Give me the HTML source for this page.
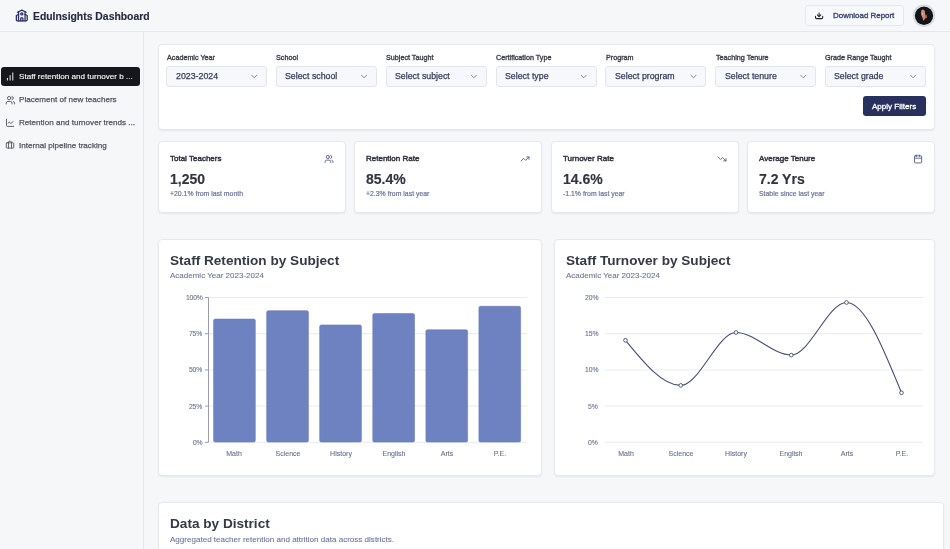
<!DOCTYPE html>
<html><head><meta charset="utf-8"><style>
html,body{margin:0;padding:0;width:950px;height:549px;overflow:hidden;background:#f6f7f9;font-family:"Liberation Sans", sans-serif;}
body{position:relative;}
div{will-change:transform;}
</style></head><body>
<div style="position:absolute;left:0px;top:31px;width:950px;height:1px;background:#e4e8ec"></div>
<div style="position:absolute;left:143px;top:32px;width:1px;height:517px;background:#e4e8ec"></div>
<div style="position:absolute;left:32.8px;top:12.00px;font-size:10.4px;line-height:10.4px;font-weight:700;color:#272b40;white-space:nowrap;letter-spacing:0px;-webkit-text-stroke:0.15px #272b40;">EduInsights Dashboard</div>
<div style="position:absolute;left:805px;top:5px;width:99px;height:21px;background:#f8f9fb;border:1px solid #e4e8ec;border-radius:3px;box-sizing:border-box"></div>
<div style="position:absolute;left:832.7px;top:12.00px;font-size:7.95px;line-height:7.95px;font-weight:400;color:#3b4370;white-space:nowrap;letter-spacing:0px;-webkit-text-stroke:0.35px #3b4370;">Download Report</div>
<div style="position:absolute;left:1px;top:67px;width:139px;height:19.3px;background:#16171d;border-radius:3px"></div>
<div style="position:absolute;left:18.6px;top:73.00px;font-size:8.1px;line-height:8.1px;font-weight:400;color:#f4f4f6;white-space:nowrap;letter-spacing:0px;-webkit-text-stroke:0.15px #f4f4f6;">Staff retention and turnover b ...</div>
<div style="position:absolute;left:18.8px;top:96.00px;font-size:8.1px;line-height:8.1px;font-weight:400;color:#50555f;white-space:nowrap;letter-spacing:0px;-webkit-text-stroke:0.25px #50555f;">Placement of new teachers</div>
<div style="position:absolute;left:18.8px;top:119.00px;font-size:8.1px;line-height:8.1px;font-weight:400;color:#50555f;white-space:nowrap;letter-spacing:0px;-webkit-text-stroke:0.25px #50555f;">Retention and turnover trends ...</div>
<div style="position:absolute;left:18.8px;top:142.00px;font-size:8.1px;line-height:8.1px;font-weight:400;color:#50555f;white-space:nowrap;letter-spacing:0px;-webkit-text-stroke:0.25px #50555f;">Internal pipeline tracking</div>
<div style="position:absolute;left:158px;top:44px;width:777px;height:86px;background:#fff;border:1px solid #e5e8ee;border-radius:4px;box-sizing:border-box;box-shadow:0 1px 1.5px rgba(20,30,60,0.07)"></div>
<div style="position:absolute;left:166.6px;top:54.00px;font-size:7.2px;line-height:7.2px;font-weight:400;color:#3a3e49;white-space:nowrap;letter-spacing:0px;-webkit-text-stroke:0.35px #3a3e49;">Academic Year</div>
<div style="position:absolute;left:166px;top:66px;width:101px;height:21px;background:#f7f8fb;border:1px solid #e1e5ec;border-radius:3px;box-sizing:border-box"></div>
<div style="position:absolute;left:175.5px;top:72.00px;font-size:8.8px;line-height:8.8px;font-weight:400;color:#363c5a;white-space:nowrap;letter-spacing:0px;-webkit-text-stroke:0.25px #363c5a;">2023-2024</div>
<div style="position:absolute;left:276.40000000000003px;top:54.00px;font-size:7.2px;line-height:7.2px;font-weight:400;color:#3a3e49;white-space:nowrap;letter-spacing:0px;-webkit-text-stroke:0.35px #3a3e49;">School</div>
<div style="position:absolute;left:276px;top:66px;width:101px;height:21px;background:#f7f8fb;border:1px solid #e1e5ec;border-radius:3px;box-sizing:border-box"></div>
<div style="position:absolute;left:285.3px;top:72.00px;font-size:8.8px;line-height:8.8px;font-weight:400;color:#363c5a;white-space:nowrap;letter-spacing:0px;-webkit-text-stroke:0.25px #363c5a;">Select school</div>
<div style="position:absolute;left:386.20000000000005px;top:54.00px;font-size:7.2px;line-height:7.2px;font-weight:400;color:#3a3e49;white-space:nowrap;letter-spacing:0px;-webkit-text-stroke:0.35px #3a3e49;">Subject Taught</div>
<div style="position:absolute;left:386px;top:66px;width:101px;height:21px;background:#f7f8fb;border:1px solid #e1e5ec;border-radius:3px;box-sizing:border-box"></div>
<div style="position:absolute;left:395.1px;top:72.00px;font-size:8.8px;line-height:8.8px;font-weight:400;color:#363c5a;white-space:nowrap;letter-spacing:0px;-webkit-text-stroke:0.25px #363c5a;">Select subject</div>
<div style="position:absolute;left:496.0px;top:54.00px;font-size:7.2px;line-height:7.2px;font-weight:400;color:#3a3e49;white-space:nowrap;letter-spacing:0px;-webkit-text-stroke:0.35px #3a3e49;">Certification Type</div>
<div style="position:absolute;left:496px;top:66px;width:101px;height:21px;background:#f7f8fb;border:1px solid #e1e5ec;border-radius:3px;box-sizing:border-box"></div>
<div style="position:absolute;left:504.9px;top:72.00px;font-size:8.8px;line-height:8.8px;font-weight:400;color:#363c5a;white-space:nowrap;letter-spacing:0px;-webkit-text-stroke:0.25px #363c5a;">Select type</div>
<div style="position:absolute;left:605.8000000000001px;top:54.00px;font-size:7.2px;line-height:7.2px;font-weight:400;color:#3a3e49;white-space:nowrap;letter-spacing:0px;-webkit-text-stroke:0.35px #3a3e49;">Program</div>
<div style="position:absolute;left:605px;top:66px;width:101px;height:21px;background:#f7f8fb;border:1px solid #e1e5ec;border-radius:3px;box-sizing:border-box"></div>
<div style="position:absolute;left:614.7px;top:72.00px;font-size:8.8px;line-height:8.8px;font-weight:400;color:#363c5a;white-space:nowrap;letter-spacing:0px;-webkit-text-stroke:0.25px #363c5a;">Select program</div>
<div style="position:absolute;left:715.6px;top:54.00px;font-size:7.2px;line-height:7.2px;font-weight:400;color:#3a3e49;white-space:nowrap;letter-spacing:0px;-webkit-text-stroke:0.35px #3a3e49;">Teaching Tenure</div>
<div style="position:absolute;left:715px;top:66px;width:101px;height:21px;background:#f7f8fb;border:1px solid #e1e5ec;border-radius:3px;box-sizing:border-box"></div>
<div style="position:absolute;left:724.5px;top:72.00px;font-size:8.8px;line-height:8.8px;font-weight:400;color:#363c5a;white-space:nowrap;letter-spacing:0px;-webkit-text-stroke:0.25px #363c5a;">Select tenure</div>
<div style="position:absolute;left:825.4px;top:54.00px;font-size:7.2px;line-height:7.2px;font-weight:400;color:#3a3e49;white-space:nowrap;letter-spacing:0px;-webkit-text-stroke:0.35px #3a3e49;">Grade Range Taught</div>
<div style="position:absolute;left:825px;top:66px;width:101px;height:21px;background:#f7f8fb;border:1px solid #e1e5ec;border-radius:3px;box-sizing:border-box"></div>
<div style="position:absolute;left:834.3px;top:72.00px;font-size:8.8px;line-height:8.8px;font-weight:400;color:#363c5a;white-space:nowrap;letter-spacing:0px;-webkit-text-stroke:0.25px #363c5a;">Select grade</div>
<div style="position:absolute;left:863px;top:96px;width:63px;height:20px;background:#28305e;border-radius:3px"></div>
<div style="position:absolute;left:872.4px;top:103.00px;font-size:8.05px;line-height:8.05px;font-weight:400;color:#ffffff;white-space:nowrap;letter-spacing:0px;-webkit-text-stroke:0.3px #ffffff;">Apply Filters</div>
<div style="position:absolute;left:158px;top:141px;width:188px;height:72px;background:#fff;border:1px solid #e5e8ee;border-radius:4px;box-sizing:border-box;box-shadow:0 1px 1.5px rgba(20,30,60,0.07)"></div>
<div style="position:absolute;left:170px;top:155.00px;font-size:8.0px;line-height:8.0px;font-weight:400;color:#30343f;white-space:nowrap;letter-spacing:0px;-webkit-text-stroke:0.45px #30343f;">Total Teachers</div>
<div style="position:absolute;left:170px;top:172.00px;font-size:14px;line-height:14px;font-weight:700;color:#32353e;white-space:nowrap;letter-spacing:0px;-webkit-text-stroke:0.15px #32353e;">1,250</div>
<div style="position:absolute;left:170px;top:191.00px;font-size:6.9px;line-height:6.9px;font-weight:400;color:#6b7395;white-space:nowrap;letter-spacing:0px;-webkit-text-stroke:0.2px #6b7395;">+20.1% from last month</div>
<div style="position:absolute;left:354px;top:141px;width:188px;height:72px;background:#fff;border:1px solid #e5e8ee;border-radius:4px;box-sizing:border-box;box-shadow:0 1px 1.5px rgba(20,30,60,0.07)"></div>
<div style="position:absolute;left:366px;top:155.00px;font-size:8.0px;line-height:8.0px;font-weight:400;color:#30343f;white-space:nowrap;letter-spacing:0px;-webkit-text-stroke:0.45px #30343f;">Retention Rate</div>
<div style="position:absolute;left:366px;top:172.00px;font-size:14px;line-height:14px;font-weight:700;color:#32353e;white-space:nowrap;letter-spacing:0px;-webkit-text-stroke:0.15px #32353e;">85.4%</div>
<div style="position:absolute;left:366px;top:191.00px;font-size:6.9px;line-height:6.9px;font-weight:400;color:#6b7395;white-space:nowrap;letter-spacing:0px;-webkit-text-stroke:0.2px #6b7395;">+2.3% from last year</div>
<div style="position:absolute;left:551px;top:141px;width:188px;height:72px;background:#fff;border:1px solid #e5e8ee;border-radius:4px;box-sizing:border-box;box-shadow:0 1px 1.5px rgba(20,30,60,0.07)"></div>
<div style="position:absolute;left:563px;top:155.00px;font-size:8.0px;line-height:8.0px;font-weight:400;color:#30343f;white-space:nowrap;letter-spacing:0px;-webkit-text-stroke:0.45px #30343f;">Turnover Rate</div>
<div style="position:absolute;left:563px;top:172.00px;font-size:14px;line-height:14px;font-weight:700;color:#32353e;white-space:nowrap;letter-spacing:0px;-webkit-text-stroke:0.15px #32353e;">14.6%</div>
<div style="position:absolute;left:563px;top:191.00px;font-size:6.9px;line-height:6.9px;font-weight:400;color:#6b7395;white-space:nowrap;letter-spacing:0px;-webkit-text-stroke:0.2px #6b7395;">-1.1% from last year</div>
<div style="position:absolute;left:747px;top:141px;width:188px;height:72px;background:#fff;border:1px solid #e5e8ee;border-radius:4px;box-sizing:border-box;box-shadow:0 1px 1.5px rgba(20,30,60,0.07)"></div>
<div style="position:absolute;left:759px;top:155.00px;font-size:8.0px;line-height:8.0px;font-weight:400;color:#30343f;white-space:nowrap;letter-spacing:0px;-webkit-text-stroke:0.45px #30343f;">Average Tenure</div>
<div style="position:absolute;left:759px;top:172.00px;font-size:14px;line-height:14px;font-weight:700;color:#32353e;white-space:nowrap;letter-spacing:0px;-webkit-text-stroke:0.15px #32353e;">7.2 Yrs</div>
<div style="position:absolute;left:759px;top:191.00px;font-size:6.9px;line-height:6.9px;font-weight:400;color:#6b7395;white-space:nowrap;letter-spacing:0px;-webkit-text-stroke:0.2px #6b7395;">Stable since last year</div>
<div style="position:absolute;left:158px;top:239px;width:384px;height:237px;background:#fff;border:1px solid #e5e8ee;border-radius:4px;box-sizing:border-box;box-shadow:0 1px 1.5px rgba(20,30,60,0.07)"></div>
<div style="position:absolute;left:170.2px;top:254.00px;font-size:13.6px;line-height:13.6px;font-weight:700;color:#363a45;white-space:nowrap;letter-spacing:0px;-webkit-text-stroke:0.001px #363a45;">Staff Retention by Subject</div>
<div style="position:absolute;left:170.2px;top:272.00px;font-size:8px;line-height:8px;font-weight:400;color:#6b7395;white-space:nowrap;letter-spacing:0px;-webkit-text-stroke:0.08px #6b7395;">Academic Year 2023-2024</div>
<div style="position:absolute;left:554px;top:239px;width:381px;height:237px;background:#fff;border:1px solid #e5e8ee;border-radius:4px;box-sizing:border-box;box-shadow:0 1px 1.5px rgba(20,30,60,0.07)"></div>
<div style="position:absolute;left:566.2px;top:254.00px;font-size:13.6px;line-height:13.6px;font-weight:700;color:#363a45;white-space:nowrap;letter-spacing:0px;-webkit-text-stroke:0.001px #363a45;">Staff Turnover by Subject</div>
<div style="position:absolute;left:566.2px;top:272.00px;font-size:8px;line-height:8px;font-weight:400;color:#6b7395;white-space:nowrap;letter-spacing:0px;-webkit-text-stroke:0.08px #6b7395;">Academic Year 2023-2024</div>
<div style="position:absolute;right:747.8px;text-align:right;top:295.00px;font-size:6.8px;line-height:6.8px;font-weight:400;color:#66718f;white-space:nowrap;letter-spacing:-0.2px;-webkit-text-stroke:0.1px #66718f;">100%</div>
<div style="position:absolute;right:747.8px;text-align:right;top:331.00px;font-size:6.8px;line-height:6.8px;font-weight:400;color:#66718f;white-space:nowrap;letter-spacing:-0.2px;-webkit-text-stroke:0.1px #66718f;">75%</div>
<div style="position:absolute;right:747.8px;text-align:right;top:367.00px;font-size:6.8px;line-height:6.8px;font-weight:400;color:#66718f;white-space:nowrap;letter-spacing:-0.2px;-webkit-text-stroke:0.1px #66718f;">50%</div>
<div style="position:absolute;right:747.8px;text-align:right;top:404.00px;font-size:6.8px;line-height:6.8px;font-weight:400;color:#66718f;white-space:nowrap;letter-spacing:-0.2px;-webkit-text-stroke:0.1px #66718f;">25%</div>
<div style="position:absolute;right:747.8px;text-align:right;top:440.00px;font-size:6.8px;line-height:6.8px;font-weight:400;color:#66718f;white-space:nowrap;letter-spacing:-0.2px;-webkit-text-stroke:0.1px #66718f;">0%</div>
<div style="position:absolute;right:351.79999999999995px;text-align:right;top:295.00px;font-size:6.8px;line-height:6.8px;font-weight:400;color:#66718f;white-space:nowrap;letter-spacing:-0.05px;-webkit-text-stroke:0.1px #66718f;">20%</div>
<div style="position:absolute;right:351.79999999999995px;text-align:right;top:331.00px;font-size:6.8px;line-height:6.8px;font-weight:400;color:#66718f;white-space:nowrap;letter-spacing:-0.05px;-webkit-text-stroke:0.1px #66718f;">15%</div>
<div style="position:absolute;right:351.79999999999995px;text-align:right;top:367.00px;font-size:6.8px;line-height:6.8px;font-weight:400;color:#66718f;white-space:nowrap;letter-spacing:-0.05px;-webkit-text-stroke:0.1px #66718f;">10%</div>
<div style="position:absolute;right:351.79999999999995px;text-align:right;top:404.00px;font-size:6.8px;line-height:6.8px;font-weight:400;color:#66718f;white-space:nowrap;letter-spacing:-0.05px;-webkit-text-stroke:0.1px #66718f;">5%</div>
<div style="position:absolute;right:351.79999999999995px;text-align:right;top:440.00px;font-size:6.8px;line-height:6.8px;font-weight:400;color:#66718f;white-space:nowrap;letter-spacing:-0.05px;-webkit-text-stroke:0.1px #66718f;">0%</div>
<div style="position:absolute;left:34.44999999999999px;width:400px;text-align:center;top:450.00px;font-size:7px;line-height:7px;font-weight:400;color:#66718f;white-space:nowrap;letter-spacing:0px;-webkit-text-stroke:0.1px #66718f;">Math</div>
<div style="position:absolute;left:87.55000000000001px;width:400px;text-align:center;top:450.00px;font-size:7px;line-height:7px;font-weight:400;color:#66718f;white-space:nowrap;letter-spacing:0px;-webkit-text-stroke:0.1px #66718f;">Science</div>
<div style="position:absolute;left:140.55px;width:400px;text-align:center;top:450.00px;font-size:7px;line-height:7px;font-weight:400;color:#66718f;white-space:nowrap;letter-spacing:0px;-webkit-text-stroke:0.1px #66718f;">History</div>
<div style="position:absolute;left:193.65000000000003px;width:400px;text-align:center;top:450.00px;font-size:7px;line-height:7px;font-weight:400;color:#66718f;white-space:nowrap;letter-spacing:0px;-webkit-text-stroke:0.1px #66718f;">English</div>
<div style="position:absolute;left:246.75px;width:400px;text-align:center;top:450.00px;font-size:7px;line-height:7px;font-weight:400;color:#66718f;white-space:nowrap;letter-spacing:0px;-webkit-text-stroke:0.1px #66718f;">Arts</div>
<div style="position:absolute;left:299.75px;width:400px;text-align:center;top:450.00px;font-size:7px;line-height:7px;font-weight:400;color:#66718f;white-space:nowrap;letter-spacing:0px;-webkit-text-stroke:0.1px #66718f;">P.E.</div>
<div style="position:absolute;left:425.5px;width:400px;text-align:center;top:450.00px;font-size:7px;line-height:7px;font-weight:400;color:#66718f;white-space:nowrap;letter-spacing:0px;-webkit-text-stroke:0.1px #66718f;">Math</div>
<div style="position:absolute;left:480.75px;width:400px;text-align:center;top:450.00px;font-size:7px;line-height:7px;font-weight:400;color:#66718f;white-space:nowrap;letter-spacing:0px;-webkit-text-stroke:0.1px #66718f;">Science</div>
<div style="position:absolute;left:536px;width:400px;text-align:center;top:450.00px;font-size:7px;line-height:7px;font-weight:400;color:#66718f;white-space:nowrap;letter-spacing:0px;-webkit-text-stroke:0.1px #66718f;">History</div>
<div style="position:absolute;left:591.25px;width:400px;text-align:center;top:450.00px;font-size:7px;line-height:7px;font-weight:400;color:#66718f;white-space:nowrap;letter-spacing:0px;-webkit-text-stroke:0.1px #66718f;">English</div>
<div style="position:absolute;left:646.5px;width:400px;text-align:center;top:450.00px;font-size:7px;line-height:7px;font-weight:400;color:#66718f;white-space:nowrap;letter-spacing:0px;-webkit-text-stroke:0.1px #66718f;">Arts</div>
<div style="position:absolute;left:701.5px;width:400px;text-align:center;top:450.00px;font-size:7px;line-height:7px;font-weight:400;color:#66718f;white-space:nowrap;letter-spacing:0px;-webkit-text-stroke:0.1px #66718f;">P.E.</div>
<div style="position:absolute;left:158px;top:502px;width:786px;height:60px;background:#fff;border:1px solid #e5e8ee;border-radius:4px;box-sizing:border-box;box-shadow:0 1px 1.5px rgba(20,30,60,0.07)"></div>
<div style="position:absolute;left:170.4px;top:517.00px;font-size:13.6px;line-height:13.6px;font-weight:700;color:#363a45;white-space:nowrap;letter-spacing:0px;-webkit-text-stroke:0.001px #363a45;">Data by District</div>
<div style="position:absolute;left:170.4px;top:536.00px;font-size:8.05px;line-height:8.05px;font-weight:400;color:#6b7395;white-space:nowrap;letter-spacing:0px;-webkit-text-stroke:0.08px #6b7395;">Aggregated teacher retention and attrition data across districts.</div>
<svg style="position:absolute;left:0;top:0;pointer-events:none" width="950" height="549" viewBox="0 0 950 549"><line x1="208.5" x2="527" y1="297.5" y2="297.5" stroke="#e8ebf1" stroke-width="1"/><line x1="205" x2="208.5" y1="297.5" y2="297.5" stroke="#9a9ca6" stroke-width="1"/><line x1="208.5" x2="527" y1="333.7" y2="333.7" stroke="#e8ebf1" stroke-width="1"/><line x1="205" x2="208.5" y1="333.7" y2="333.7" stroke="#9a9ca6" stroke-width="1"/><line x1="208.5" x2="527" y1="369.9" y2="369.9" stroke="#e8ebf1" stroke-width="1"/><line x1="205" x2="208.5" y1="369.9" y2="369.9" stroke="#9a9ca6" stroke-width="1"/><line x1="208.5" x2="527" y1="406.1" y2="406.1" stroke="#e8ebf1" stroke-width="1"/><line x1="205" x2="208.5" y1="406.1" y2="406.1" stroke="#9a9ca6" stroke-width="1"/><line x1="208.5" x2="527" y1="442.3" y2="442.3" stroke="#e8ebf1" stroke-width="1"/><line x1="205" x2="208.5" y1="442.3" y2="442.3" stroke="#9a9ca6" stroke-width="1"/><line x1="208.5" x2="208.5" y1="297.5" y2="442.3" stroke="#9a9ca6" stroke-width="1"/><path d="M213.6,440.5 V320.6 Q213.6,319.1 215.1,319.1 H253.8 Q255.3,319.1 255.3,320.6 V440.5 Q255.3,442 253.8,442 H215.1 Q213.6,442 213.6,440.5 Z" fill="#6e82c2" stroke="#677bbc" stroke-width="0.6"/><path d="M266.7,440.5 V312.2 Q266.7,310.7 268.2,310.7 H306.9 Q308.4,310.7 308.4,312.2 V440.5 Q308.4,442 306.9,442 H268.2 Q266.7,442 266.7,440.5 Z" fill="#6e82c2" stroke="#677bbc" stroke-width="0.6"/><path d="M319.7,440.5 V326.5 Q319.7,325.0 321.2,325.0 H359.9 Q361.4,325.0 361.4,326.5 V440.5 Q361.4,442 359.9,442 H321.2 Q319.7,442 319.7,440.5 Z" fill="#6e82c2" stroke="#677bbc" stroke-width="0.6"/><path d="M372.8,440.5 V315.1 Q372.8,313.6 374.3,313.6 H413.0 Q414.5,313.6 414.5,315.1 V440.5 Q414.5,442 413.0,442 H374.3 Q372.8,442 372.8,440.5 Z" fill="#6e82c2" stroke="#677bbc" stroke-width="0.6"/><path d="M425.9,440.5 V331.3 Q425.9,329.8 427.4,329.8 H466.09999999999997 Q467.59999999999997,329.8 467.59999999999997,331.3 V440.5 Q467.59999999999997,442 466.09999999999997,442 H427.4 Q425.9,442 425.9,440.5 Z" fill="#6e82c2" stroke="#677bbc" stroke-width="0.6"/><path d="M478.9,440.5 V307.8 Q478.9,306.3 480.4,306.3 H519.1 Q520.6,306.3 520.6,307.8 V440.5 Q520.6,442 519.1,442 H480.4 Q478.9,442 478.9,440.5 Z" fill="#6e82c2" stroke="#677bbc" stroke-width="0.6"/><line x1="604.6" x2="922.8" y1="297.5" y2="297.5" stroke="#e8ebf1" stroke-width="1"/><line x1="604.6" x2="922.8" y1="333.7" y2="333.7" stroke="#e8ebf1" stroke-width="1"/><line x1="604.6" x2="922.8" y1="369.9" y2="369.9" stroke="#e8ebf1" stroke-width="1"/><line x1="604.6" x2="922.8" y1="406.1" y2="406.1" stroke="#e8ebf1" stroke-width="1"/><line x1="604.6" x2="922.8" y1="442.3" y2="442.3" stroke="#e8ebf1" stroke-width="1"/><path d="M625.50,340.30C643.92,362.85,662.33,385.40,680.75,385.40C699.17,385.40,717.58,332.50,736.00,332.50C754.42,332.50,772.83,355.10,791.25,355.10C809.67,355.10,828.08,302.50,846.50,302.50C864.83,302.50,883.17,347.65,901.50,392.80" fill="none" stroke="#434d73" stroke-width="1.1"/><circle cx="625.5" cy="340.3" r="1.85" fill="#fff" stroke="#434d73" stroke-width="0.9"/><circle cx="680.75" cy="385.4" r="1.85" fill="#fff" stroke="#434d73" stroke-width="0.9"/><circle cx="736" cy="332.5" r="1.85" fill="#fff" stroke="#434d73" stroke-width="0.9"/><circle cx="791.25" cy="355.1" r="1.85" fill="#fff" stroke="#434d73" stroke-width="0.9"/><circle cx="846.5" cy="302.5" r="1.85" fill="#fff" stroke="#434d73" stroke-width="0.9"/><circle cx="901.5" cy="392.8" r="1.85" fill="#fff" stroke="#434d73" stroke-width="0.9"/><g transform="translate(15.3,9) scale(0.5416666666666666)" fill="none" stroke="#2b3566" stroke-width="2.4" stroke-linecap="round" stroke-linejoin="round"><path d="M14 22v-4a2 2 0 1 0-4 0v4"/><path d="m18 10 4 2v8a2 2 0 0 1-2 2H4a2 2 0 0 1-2-2v-8l4-2"/><path d="M18 5v17"/><path d="m4 6 8-4 8 4"/><path d="M6 5v17"/><circle cx="12" cy="9" r="2"/></g><g fill="none" stroke="#1f2330" stroke-width="1.05" stroke-linecap="round" stroke-linejoin="round"><path d="M815.5,16.2 V17.6 Q815.5,18.6 816.5,18.6 H821.7 Q822.7,18.6 822.7,17.6 V16.2"/><path d="M819.1,12.9 V16.4"/><path d="M817.4,14.9 L819.1,16.6 L820.8,14.9"/></g><circle cx="924" cy="15.7" r="10.4" fill="none" stroke="#d6d9e3" stroke-width="1.6"/><circle cx="924" cy="15.7" r="9.2" fill="#141318"/><path d="M921.5 10 Q923.5 8.6 924.8 11 L925.4 16.5 Q925 19.5 923.4 21 L922.4 17.5 Q920.8 15.5 921 12.5 Z" fill="#c98f70"/><path d="M925.3 14.5 Q927.4 14.6 927 17.8 L924.6 19 Z" fill="#a8684c"/><circle cx="922.6" cy="13.8" r="0.6" fill="#e8d0c0"/><g transform="translate(4.7,71.1) scale(0.45)" fill="none" stroke="#ffffff" stroke-width="2.1" stroke-linecap="round" stroke-linejoin="round"><path d="M12 20V10"/><path d="M18 20V4"/><path d="M6 20v-4"/></g><g transform="translate(5.4,95.2) scale(0.4166666666666667)" fill="none" stroke="#50555f" stroke-width="2.2" stroke-linecap="round" stroke-linejoin="round"><path d="M16 21v-2a4 4 0 0 0-4-4H6a4 4 0 0 0-4 4v2"/><circle cx="9" cy="7" r="4"/><path d="M22 21v-2a4 4 0 0 0-3-3.87"/><path d="M16 3.13a4 4 0 0 1 0 7.75"/></g><g transform="translate(5.3,118) scale(0.39999999999999997)" fill="none" stroke="#50555f" stroke-width="2.3" stroke-linecap="round" stroke-linejoin="round"><path d="M3 3v16a2 2 0 0 0 2 2h16"/><path d="m19 9-5 5-4-4-3 3"/></g><g transform="translate(5.5,140.2) scale(0.375)" fill="none" stroke="#50555f" stroke-width="2.4" stroke-linecap="round" stroke-linejoin="round"><path d="M16 21V5a2 2 0 0 0-2-2h-4a2 2 0 0 0-2 2v16"/><rect width="20" height="14" x="2" y="7" rx="2" ry="2"/></g><polyline points="251.7,75.2 254.3,77.8 256.9,75.2" fill="none" stroke="#6b7290" stroke-width="0.85" stroke-linecap="round" stroke-linejoin="round"/><polyline points="361.5,75.2 364.1,77.8 366.70000000000005,75.2" fill="none" stroke="#6b7290" stroke-width="0.85" stroke-linecap="round" stroke-linejoin="round"/><polyline points="471.3,75.2 473.90000000000003,77.8 476.5,75.2" fill="none" stroke="#6b7290" stroke-width="0.85" stroke-linecap="round" stroke-linejoin="round"/><polyline points="581.1,75.2 583.6999999999999,77.8 586.3,75.2" fill="none" stroke="#6b7290" stroke-width="0.85" stroke-linecap="round" stroke-linejoin="round"/><polyline points="690.9000000000001,75.2 693.5,77.8 696.1,75.2" fill="none" stroke="#6b7290" stroke-width="0.85" stroke-linecap="round" stroke-linejoin="round"/><polyline points="800.7,75.2 803.3,77.8 805.9,75.2" fill="none" stroke="#6b7290" stroke-width="0.85" stroke-linecap="round" stroke-linejoin="round"/><polyline points="910.5,75.2 913.0999999999999,77.8 915.6999999999999,75.2" fill="none" stroke="#6b7290" stroke-width="0.85" stroke-linecap="round" stroke-linejoin="round"/><g transform="translate(324.3,154.2) scale(0.3958333333333333)" fill="none" stroke="#56618c" stroke-width="2.3" stroke-linecap="round" stroke-linejoin="round"><path d="M16 21v-2a4 4 0 0 0-4-4H6a4 4 0 0 0-4 4v2"/><circle cx="9" cy="7" r="4"/><path d="M22 21v-2a4 4 0 0 0-3-3.87"/><path d="M16 3.13a4 4 0 0 1 0 7.75"/></g><g transform="translate(520.3,154.2) scale(0.3958333333333333)" fill="none" stroke="#56618c" stroke-width="2.3" stroke-linecap="round" stroke-linejoin="round"><polyline points="22 7 13.5 15.5 8.5 10.5 2 17"/><polyline points="16 7 22 7 22 13"/></g><g transform="translate(717.3,154.2) scale(0.3958333333333333)" fill="none" stroke="#56618c" stroke-width="2.3" stroke-linecap="round" stroke-linejoin="round"><polyline points="22 17 13.5 8.5 8.5 13.5 2 7"/><polyline points="16 17 22 17 22 11"/></g><g transform="translate(913.3,154.2) scale(0.3958333333333333)" fill="none" stroke="#56618c" stroke-width="2.3" stroke-linecap="round" stroke-linejoin="round"><rect width="18" height="18" x="3" y="4" rx="2" ry="2"/><line x1="16" x2="16" y1="2" y2="6"/><line x1="8" x2="8" y1="2" y2="6"/><line x1="3" x2="21" y1="10" y2="10"/></g></svg>
</body></html>
